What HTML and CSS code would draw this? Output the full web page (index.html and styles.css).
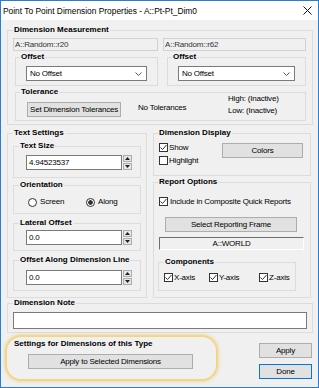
FILE: index.html
```html
<!DOCTYPE html>
<html>

<head>
    <meta charset="UTF-8">
    <title>Point To Point Dimension Properties</title>
    <link rel="stylesheet" href="styles.css">
</head>

<body>
    <div class="window">
        <div class="titleBar">
            <span class="titleText">Point To Point Dimension Properties - A::Pt-Pt_Dim0</span>
            <svg class="closeIcon" width="9" height="9" viewBox="0 0 9 9"><path d="M0.5 0.5 L8.5 8.5 M8.5 0.5 L0.5 8.5" stroke="#111" stroke-width="1" fill="none"/></svg>
        </div>
        <div class="dialog">
            <fieldset class="group measureGroup">
                <legend>Dimension Measurement</legend>
                <div class="measureCols">
                    <div class="measureCol">
                        <div class="readField">A::Random::r20</div>
                        <fieldset class="group offsetGroup">
                            <legend>Offset</legend>
                            <div class="dropDown">
                                <span>No Offset</span>
                                <svg width="7" height="4" viewBox="0 0 7 4"><path d="M0.5 0.5 L3.5 3.5 L6.5 0.5" fill="none" stroke="#555"/></svg>
                            </div>
                        </fieldset>
                    </div>
                    <div class="measureCol">
                        <div class="readField">A::Random::r62</div>
                        <fieldset class="group offsetGroup right">
                            <legend>Offset</legend>
                            <div class="dropDown">
                                <span>No Offset</span>
                                <svg width="7" height="4" viewBox="0 0 7 4"><path d="M0.5 0.5 L3.5 3.5 L6.5 0.5" fill="none" stroke="#555"/></svg>
                            </div>
                        </fieldset>
                    </div>
                </div>
                <fieldset class="group toleranceGroup">
                    <legend>Tolerance</legend>
                    <div class="tolRow">
                        <button class="btn tolButton">Set Dimension Tolerances</button>
                        <span class="tolNone">No Tolerances</span>
                        <div class="tolLimits">
                            <span>High: (Inactive)</span>
                            <span>Low: (Inactive)</span>
                        </div>
                    </div>
                </fieldset>
            </fieldset>

            <div class="middle">
                <fieldset class="group textGroup">
                    <legend>Text Settings</legend>
                    <fieldset class="group subGroup sizeGroup">
                        <legend>Text Size</legend>
                        <div class="spinBox">
                            <div class="spinInput">4.94523537</div>
                            <div class="spinButtons">
                                <span class="spinBtn"><svg width="5" height="3" viewBox="0 0 5 3"><path d="M0 3 L2.5 0 L5 3 Z" fill="#222"/></svg></span>
                                <span class="spinBtn"><svg width="5" height="3" viewBox="0 0 5 3"><path d="M0 0 L2.5 3 L5 0 Z" fill="#222"/></svg></span>
                            </div>
                        </div>
                    </fieldset>
                    <fieldset class="group subGroup orientGroup">
                        <legend>Orientation</legend>
                        <div class="radioRow">
                            <label class="radio"><span class="radioDot"></span>Screen</label>
                            <label class="radio"><span class="radioDot on"></span>Along</label>
                        </div>
                    </fieldset>
                    <fieldset class="group subGroup lateralGroup">
                        <legend>Lateral Offset</legend>
                        <div class="spinBox">
                            <div class="spinInput">0.0</div>
                            <div class="spinButtons">
                                <span class="spinBtn"><svg width="5" height="3" viewBox="0 0 5 3"><path d="M0 3 L2.5 0 L5 3 Z" fill="#222"/></svg></span>
                                <span class="spinBtn"><svg width="5" height="3" viewBox="0 0 5 3"><path d="M0 0 L2.5 3 L5 0 Z" fill="#222"/></svg></span>
                            </div>
                        </div>
                    </fieldset>
                    <fieldset class="group subGroup alongGroup">
                        <legend>Offset Along Dimension Line</legend>
                        <div class="spinBox">
                            <div class="spinInput">0.0</div>
                            <div class="spinButtons">
                                <span class="spinBtn"><svg width="5" height="3" viewBox="0 0 5 3"><path d="M0 3 L2.5 0 L5 3 Z" fill="#222"/></svg></span>
                                <span class="spinBtn"><svg width="5" height="3" viewBox="0 0 5 3"><path d="M0 0 L2.5 3 L5 0 Z" fill="#222"/></svg></span>
                            </div>
                        </div>
                    </fieldset>
                </fieldset>

                <div class="rightCol">
                    <fieldset class="group displayGroup">
                        <legend>Dimension Display</legend>
                        <div class="displayBody">
                            <div class="checkList">
                                <label class="check"><span class="checkBox"><svg width="7" height="7" viewBox="0 0 7 7"><path d="M0.5 3.5 L2.5 5.5 L6.5 1" fill="none" stroke="#333"/></svg></span>Show</label>
                                <label class="check"><span class="checkBox"></span>Highlight</label>
                            </div>
                            <button class="btn colorsButton">Colors</button>
                        </div>
                    </fieldset>
                    <fieldset class="group reportGroup">
                        <legend>Report Options</legend>
                        <label class="check includeCheck"><span class="checkBox"><svg width="7" height="7" viewBox="0 0 7 7"><path d="M0.5 3.5 L2.5 5.5 L6.5 1" fill="none" stroke="#333"/></svg></span>Include in Composite Quick Reports</label>
                        <button class="btn frameButton">Select Reporting Frame</button>
                        <div class="worldField">A::WORLD</div>
                        <fieldset class="group componentsGroup">
                            <legend>Components</legend>
                            <div class="axisRow">
                                <label class="check"><span class="checkBox"><svg width="7" height="7" viewBox="0 0 7 7"><path d="M0.5 3.5 L2.5 5.5 L6.5 1" fill="none" stroke="#333"/></svg></span>X-axis</label>
                                <label class="check"><span class="checkBox"><svg width="7" height="7" viewBox="0 0 7 7"><path d="M0.5 3.5 L2.5 5.5 L6.5 1" fill="none" stroke="#333"/></svg></span>Y-axis</label>
                                <label class="check"><span class="checkBox"><svg width="7" height="7" viewBox="0 0 7 7"><path d="M0.5 3.5 L2.5 5.5 L6.5 1" fill="none" stroke="#333"/></svg></span>Z-axis</label>
                            </div>
                        </fieldset>
                    </fieldset>
                </div>
            </div>

            <fieldset class="group noteGroup">
                <legend>Dimension Note</legend>
                <div class="noteInput"></div>
            </fieldset>

            <div class="bottomRow">
                <div class="typeSettings">
                    <div class="typeTitle">Settings for Dimensions of this Type</div>
                    <button class="btn applySelected">Apply to Selected Dimensions</button>
                </div>
                <div class="actions">
                    <button class="btn actionButton">Apply</button>
                    <button class="btn actionButton done">Done</button>
                </div>
            </div>
        </div>
    </div>
</body>

</html>
```

FILE: styles.css
```css
html, body {
    margin: 0;
}
body {
    width: 319px;
    height: 388px;
    font-family: "Liberation Sans", Arial, sans-serif;
    font-size: 8px;
    letter-spacing: -0.2px;
    white-space: nowrap;
    color: #000000;
}
.window {
    box-sizing: border-box;
    width: 319px;
    height: 388px;
    border: 1px solid #2b7cd3;
    display: flex;
    flex-direction: column;
    background: #f0f0f0;
}
.titleBar {
    height: 19px;
    background: #ffffff;
    display: flex;
    align-items: center;
    justify-content: space-between;
    padding: 0 6px 0 2px;
}
.titleText {
    font-size: 8.4px;
    letter-spacing: 0;
}
.closeIcon {
    display: block;
}
.dialog {
    flex: 1;
    padding: 5px 5px 0 6px;
    display: flex;
    flex-direction: column;
}

/* group boxes */
.group {
    margin: 0;
    padding: 0 5px 4px;
    border: 1px solid #dcdcdc;
    min-width: 0;
}
.group > legend {
    padding: 0 1px;
    font-weight: bold;
    font-size: 8px;
    letter-spacing: 0;
    line-height: 10px;
}

.btn {
    box-sizing: border-box;
    height: 15px;
    margin: 0;
    padding: 0;
    border: 1px solid #adadad;
    background: #e1e1e1;
    font-family: inherit;
    font-size: 8px;
    letter-spacing: -0.2px;
    line-height: 13px;
    color: #000000;
    text-align: center;
    white-space: nowrap;
}

/* measurement */
.measureGroup {
    padding: 0 6px 3px 5px;
}
.measureCols {
    display: grid;
    grid-template-columns: 145px 1fr;
    column-gap: 5px;
    margin-top: 3px;
}
.readField {
    box-sizing: border-box;
    height: 13px;
    border: 1px solid #d2d2d2;
    background: #f0f0f0;
    line-height: 11px;
    padding-left: 1px;
    color: #333333;
}
.offsetGroup {
    margin: 1px 0 0 2px;
    padding: 0 4px 4px;
}
.offsetGroup.right {
    margin-left: 4px;
}
.dropDown {
    box-sizing: border-box;
    height: 15px;
    margin: 4px 6px 0;
    border: 1px solid #7a7a7a;
    background: #ffffff;
    display: flex;
    align-items: center;
    justify-content: space-between;
    padding: 0 4px 0 3px;
}
.dropDown svg {
    display: block;
}
.toleranceGroup {
    margin: 1px 0 0 2px;
    padding: 0 4px 3px;
}
.tolRow {
    display: grid;
    grid-template-columns: 111px 90px auto;
    align-items: end;
    margin-top: -4px;
    padding-left: 7px;
}
.tolButton {
    width: 94px;
}
.tolNone {
    line-height: 10px;
    margin-bottom: 4px;
}
.tolLimits {
    display: flex;
    flex-direction: column;
    line-height: 12px;
}

/* middle section */
.middle {
    display: grid;
    grid-template-columns: 140px 158px;
    column-gap: 6px;
    margin-top: 3px;
}
.textGroup {
    padding: 3px 5px 6px;
}
.sizeGroup {
    padding-bottom: 7px;
}
.sizeGroup .spinBox {
    margin-top: 4px;
}
.orientGroup {
    margin-top: 2px;
    padding-bottom: 6px;
}
.lateralGroup {
    margin-top: 4px;
    padding-bottom: 5px;
}
.lateralGroup .spinBox {
    margin-top: 2px;
}
.alongGroup {
    margin-top: 4px;
    padding-bottom: 5px;
}
.alongGroup .spinBox {
    margin-top: 5px;
}
.spinBox {
    display: flex;
    gap: 1px;
    margin-left: 7px;
}
.spinInput {
    box-sizing: border-box;
    width: 96px;
    height: 15px;
    border: 1px solid #7a7a7a;
    background: #ffffff;
    line-height: 13px;
    padding-left: 2px;
}
.spinButtons {
    display: flex;
    flex-direction: column;
    gap: 1px;
}
.spinBtn {
    box-sizing: border-box;
    width: 9px;
    height: 7px;
    border: 1px solid #adadad;
    background: #e6e6e6;
    display: flex;
    align-items: center;
    justify-content: center;
}
.spinBtn svg {
    display: block;
}
.radioRow {
    display: grid;
    grid-template-columns: 58px auto;
    margin: 7px 0 0 9px;
}
.radio {
    display: flex;
    align-items: center;
    gap: 3px;
    line-height: 10px;
}
.radioDot {
    box-sizing: border-box;
    width: 9px;
    height: 9px;
    border: 1px solid #333333;
    border-radius: 50%;
    background: #ffffff;
}
.radioDot.on {
    background: radial-gradient(circle, #333333 0 2px, #ffffff 2.6px);
}

/* right column */
.rightCol {
    display: flex;
    flex-direction: column;
}
.displayGroup {
    padding: 0 5px 10px 4px;
}
.displayBody {
    display: grid;
    grid-template-columns: auto 1fr;
    align-items: start;
    margin-top: 5px;
}
.checkList {
    display: flex;
    flex-direction: column;
    gap: 4px;
    margin-left: 1px;
}
.check {
    display: flex;
    align-items: center;
    gap: 1px;
    height: 9px;
    line-height: 10px;
}
.checkBox {
    box-sizing: border-box;
    width: 9px;
    height: 9px;
    border: 1px solid #333333;
    background: #ffffff;
    display: flex;
    align-items: center;
    justify-content: center;
}
.checkBox svg {
    display: block;
}
.colorsButton {
    width: 81px;
    justify-self: end;
    margin-right: 2px;
}
.reportGroup {
    flex: 1;
    margin-top: 1px;
    padding: 0 5px 6px 4px;
}
.includeCheck {
    margin: 10px 0 0 1px;
    gap: 2px;
}
.frameButton {
    display: block;
    width: calc(100% - 15px);
    margin: 11px 0 0 7px;
}
.worldField {
    box-sizing: border-box;
    height: 13px;
    margin: 5px 1px 0;
    border-top: 1px solid #6e6e6e;
    border-left: 1px solid #6e6e6e;
    border-bottom: 1px solid #ffffff;
    border-right: 1px solid #ffffff;
    text-align: center;
    line-height: 11px;
}
.componentsGroup {
    margin: 7px 9px 0 0;
    padding: 0 5px 8px;
}
.axisRow {
    display: grid;
    grid-template-columns: 45px 50px auto;
    margin-top: 6px;
}

/* note */
.noteGroup {
    padding: 0 5px 3px;
}
.noteInput {
    box-sizing: border-box;
    height: 17px;
    margin-top: 4px;
    border: 1px solid #7a7a7a;
    background: #ffffff;
}

/* bottom */
.bottomRow {
    display: flex;
    justify-content: space-between;
    align-items: flex-start;
}
.typeSettings {
    box-sizing: border-box;
    width: 213px;
    height: 46px;
    margin: 2px 0 0 -2px;
    padding: 2px 0 0 7px;
    border: 2px solid #f3d586;
    border-radius: 16px;
    box-shadow: 0 0 3px 1px rgba(236, 204, 120, 0.55);
}
.typeTitle {
    font-weight: bold;
    font-size: 8px;
    letter-spacing: 0;
    line-height: 10px;
}
.applySelected {
    display: block;
    width: 165px;
    margin: 5px 0 0 14px;
}
.actions {
    display: flex;
    flex-direction: column;
    gap: 6px;
    margin: 10px 1px 0 0;
}
.actionButton {
    width: 53px;
}
.actionButton.done {
    border-color: #0078d7;
}
```
